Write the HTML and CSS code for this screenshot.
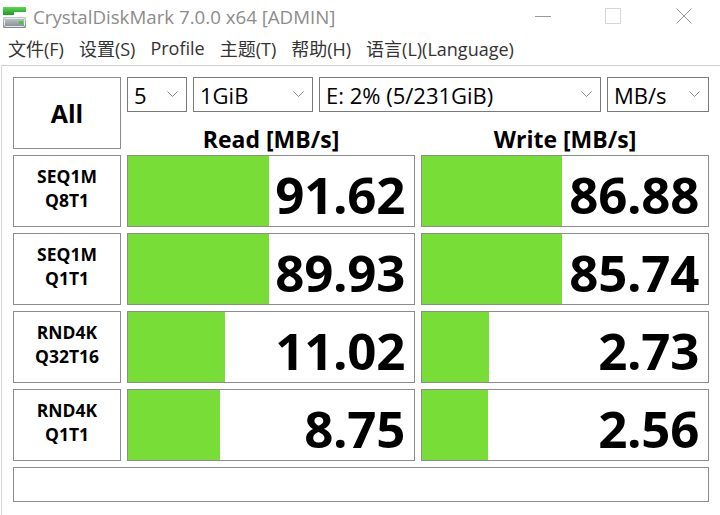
FILE: index.html
```html
<!DOCTYPE html>
<html lang="zh">
<head>
<meta charset="utf-8">
<title>CrystalDiskMark 7.0.0 x64 [ADMIN]</title>
<link rel="stylesheet" href="styles.css">
</head>
<body>
<div class="window">
  <div class="titlebar">
    <svg class="appicon" width="26" height="24" viewBox="0 0 26 24">
      <defs>
        <linearGradient id="gtop" x1="0" y1="0" x2="0" y2="1">
          <stop offset="0" stop-color="#5fd84a"/>
          <stop offset="1" stop-color="#1f9a2a"/>
        </linearGradient>
        <linearGradient id="gdisk" x1="0" y1="0" x2="0" y2="1">
          <stop offset="0" stop-color="#c9cdd1"/>
          <stop offset="1" stop-color="#7d848a"/>
        </linearGradient>
      </defs>
      <path d="M1 2 H24 V7 H12 V10 H1 Z" fill="url(#gtop)"/>
      <rect x="1" y="12" width="23" height="11" rx="1.5" fill="url(#gdisk)"/>
      <rect x="2.5" y="13.5" width="20" height="8" rx="1" fill="none" stroke="#e6e8ea" stroke-width="1"/>
      <rect x="17" y="16" width="4" height="3" fill="#45c93a"/>
    </svg>
    <span class="title">CrystalDiskMark 7.0.0 x64 [ADMIN]</span>
    <div class="controls">
      <span class="ctl"><svg width="16" height="16" viewBox="0 0 16 16"><path d="M0 8.5 H16" stroke="#9a9a9a" stroke-width="1"/></svg></span>
      <span class="ctl"><svg width="16" height="16" viewBox="0 0 16 16"><rect x="0.5" y="0.5" width="15" height="15" fill="none" stroke="#d6d6d6" stroke-width="1"/></svg></span>
      <span class="ctl"><svg width="16" height="16" viewBox="0 0 16 16"><path d="M0.5 0.5 L15.5 15.5 M15.5 0.5 L0.5 15.5" stroke="#9a9a9a" stroke-width="1"/></svg></span>
    </div>
  </div>
  <div class="menubar">
    <span class="menu">文件(F)</span>
    <span class="menu">设置(S)</span>
    <span class="menu">Profile</span>
    <span class="menu">主题(T)</span>
    <span class="menu">帮助(H)</span>
    <span class="menu">语言(L)(Language)</span>
  </div>
  <div class="main">
    <div class="btn all">All</div>
    <div class="topright">
      <div class="combos">
        <div class="combo c1"><span>5</span><svg class="chev" width="11" height="6" viewBox="0 0 11 6"><path d="M0.5 0.5 L5.5 5.5 L10.5 0.5" fill="none" stroke="#8a8a8a" stroke-width="1"/></svg></div>
        <div class="combo c2"><span>1GiB</span><svg class="chev" width="11" height="6" viewBox="0 0 11 6"><path d="M0.5 0.5 L5.5 5.5 L10.5 0.5" fill="none" stroke="#8a8a8a" stroke-width="1"/></svg></div>
        <div class="combo c3"><span>E: 2% (5/231GiB)</span><svg class="chev" width="11" height="6" viewBox="0 0 11 6"><path d="M0.5 0.5 L5.5 5.5 L10.5 0.5" fill="none" stroke="#8a8a8a" stroke-width="1"/></svg></div>
        <div class="combo c4"><span>MB/s</span><svg class="chev" width="11" height="6" viewBox="0 0 11 6"><path d="M0.5 0.5 L5.5 5.5 L10.5 0.5" fill="none" stroke="#8a8a8a" stroke-width="1"/></svg></div>
      </div>
      <div class="headers">
        <div class="head">Read [MB/s]</div>
        <div class="head">Write [MB/s]</div>
      </div>
    </div>

    <div class="btn label"><span>SEQ1M</span><span>Q8T1</span></div>
    <div class="result"><div class="bar" style="width:141px"></div><span class="val">91.62</span></div>
    <div class="result"><div class="bar" style="width:140px"></div><span class="val">86.88</span></div>

    <div class="btn label"><span>SEQ1M</span><span>Q1T1</span></div>
    <div class="result"><div class="bar" style="width:141px"></div><span class="val">89.93</span></div>
    <div class="result"><div class="bar" style="width:140px"></div><span class="val">85.74</span></div>

    <div class="btn label"><span>RND4K</span><span>Q32T16</span></div>
    <div class="result"><div class="bar" style="width:97px"></div><span class="val">11.02</span></div>
    <div class="result"><div class="bar" style="width:67px"></div><span class="val">2.73</span></div>

    <div class="btn label"><span>RND4K</span><span>Q1T1</span></div>
    <div class="result"><div class="bar" style="width:92px"></div><span class="val">8.75</span></div>
    <div class="result"><div class="bar" style="width:66px"></div><span class="val">2.56</span></div>

    <div class="status"></div>
  </div>
</div>
</body>
</html>
```

FILE: styles.css
```css
html, body {
  margin: 0;
  padding: 0;
  background: #ffffff;
}
body {
  font-family: "Open Sans", "Noto Sans CJK SC", sans-serif;
  color: #000;
  width: 720px;
  height: 515px;
  overflow: hidden;
}
.window {
  width: 720px;
  height: 515px;
  display: flex;
  flex-direction: column;
}
.titlebar {
  height: 32px;
  display: flex;
  align-items: center;
  box-sizing: border-box;
}
.appicon {
  margin-left: 2px;
  margin-right: 5px;
  margin-top: 1px;
  flex: none;
}
.title {
  font-size: 18.7px;
  color: #8c8c8c;
}
.controls {
  margin-left: auto;
  display: flex;
  align-items: center;
}
.ctl {
  width: 70px;
  height: 32px;
  display: flex;
  align-items: center;
  justify-content: center;
}
.ctl:last-child {
  width: 72px;
}
.menubar {
  height: 33px;
  display: flex;
  align-items: center;
  padding-left: 8px;
  padding-bottom: 1px;
  font-size: 18px;
  color: #333;
  box-sizing: border-box;
}
.menu {
  margin-right: 15px;
}
.main {
  flex: 1;
  border-top: 1px solid #cfcfcf;
  border-left: 1px solid #d6d6d6;
  margin-left: 1px;
  padding: 11px 0 0 11px;
  display: grid;
  grid-template-columns: 108px 288px 288px;
  grid-template-rows: 72px 72px 72px 72px 72px 35px;
  column-gap: 6px;
  row-gap: 6px;
  align-content: start;
}
.btn {
  border: 1px solid #8c8c8c;
  background: #fff;
  box-sizing: border-box;
  display: flex;
  flex-direction: column;
  align-items: center;
  justify-content: center;
  font-weight: 700;
}
.all {
  font-size: 25px;
}
.label {
  font-size: 17.5px;
  line-height: 24px;
  padding-bottom: 6px;
}
.topright {
  grid-column: 2 / 4;
  display: flex;
  flex-direction: column;
}
.combos {
  display: flex;
  gap: 6px;
  height: 35px;
}
.combo {
  height: 35px;
  box-sizing: border-box;
  border: 1px solid #7a7a7a;
  display: flex;
  align-items: center;
  justify-content: space-between;
  padding: 0 8px 0 6px;
  font-size: 22px;
  color: #000;
}
.combo span {
  margin-top: 1px;
}
.chev {
  flex: none;
  margin-top: -2px;
}
.c1 { width: 60px; }
.c2 { width: 120px; }
.c3 { width: 282px; }
.c4 { width: 102px; }
.headers {
  flex: 1;
  display: grid;
  grid-template-columns: 288px 288px;
  column-gap: 6px;
}
.head {
  text-align: center;
  font-size: 23px;
  font-weight: 700;
  line-height: 37px;
  padding-top: 9px;
}
.result {
  border: 1px solid #8c8c8c;
  box-sizing: border-box;
  display: flex;
  align-items: center;
  justify-content: flex-end;
  position: relative;
  background: #fff;
}
.bar {
  position: absolute;
  left: 0;
  top: 0;
  bottom: 0;
  background: #78dd36;
}
.val {
  position: relative;
  font-size: 51px;
  font-weight: 700;
  line-height: 1;
  padding-right: 9px;
  padding-top: 6px;
  letter-spacing: -0.3px;
}
.status {
  grid-column: 1 / 4;
  border: 1px solid #8c8c8c;
  box-sizing: border-box;
}
```
